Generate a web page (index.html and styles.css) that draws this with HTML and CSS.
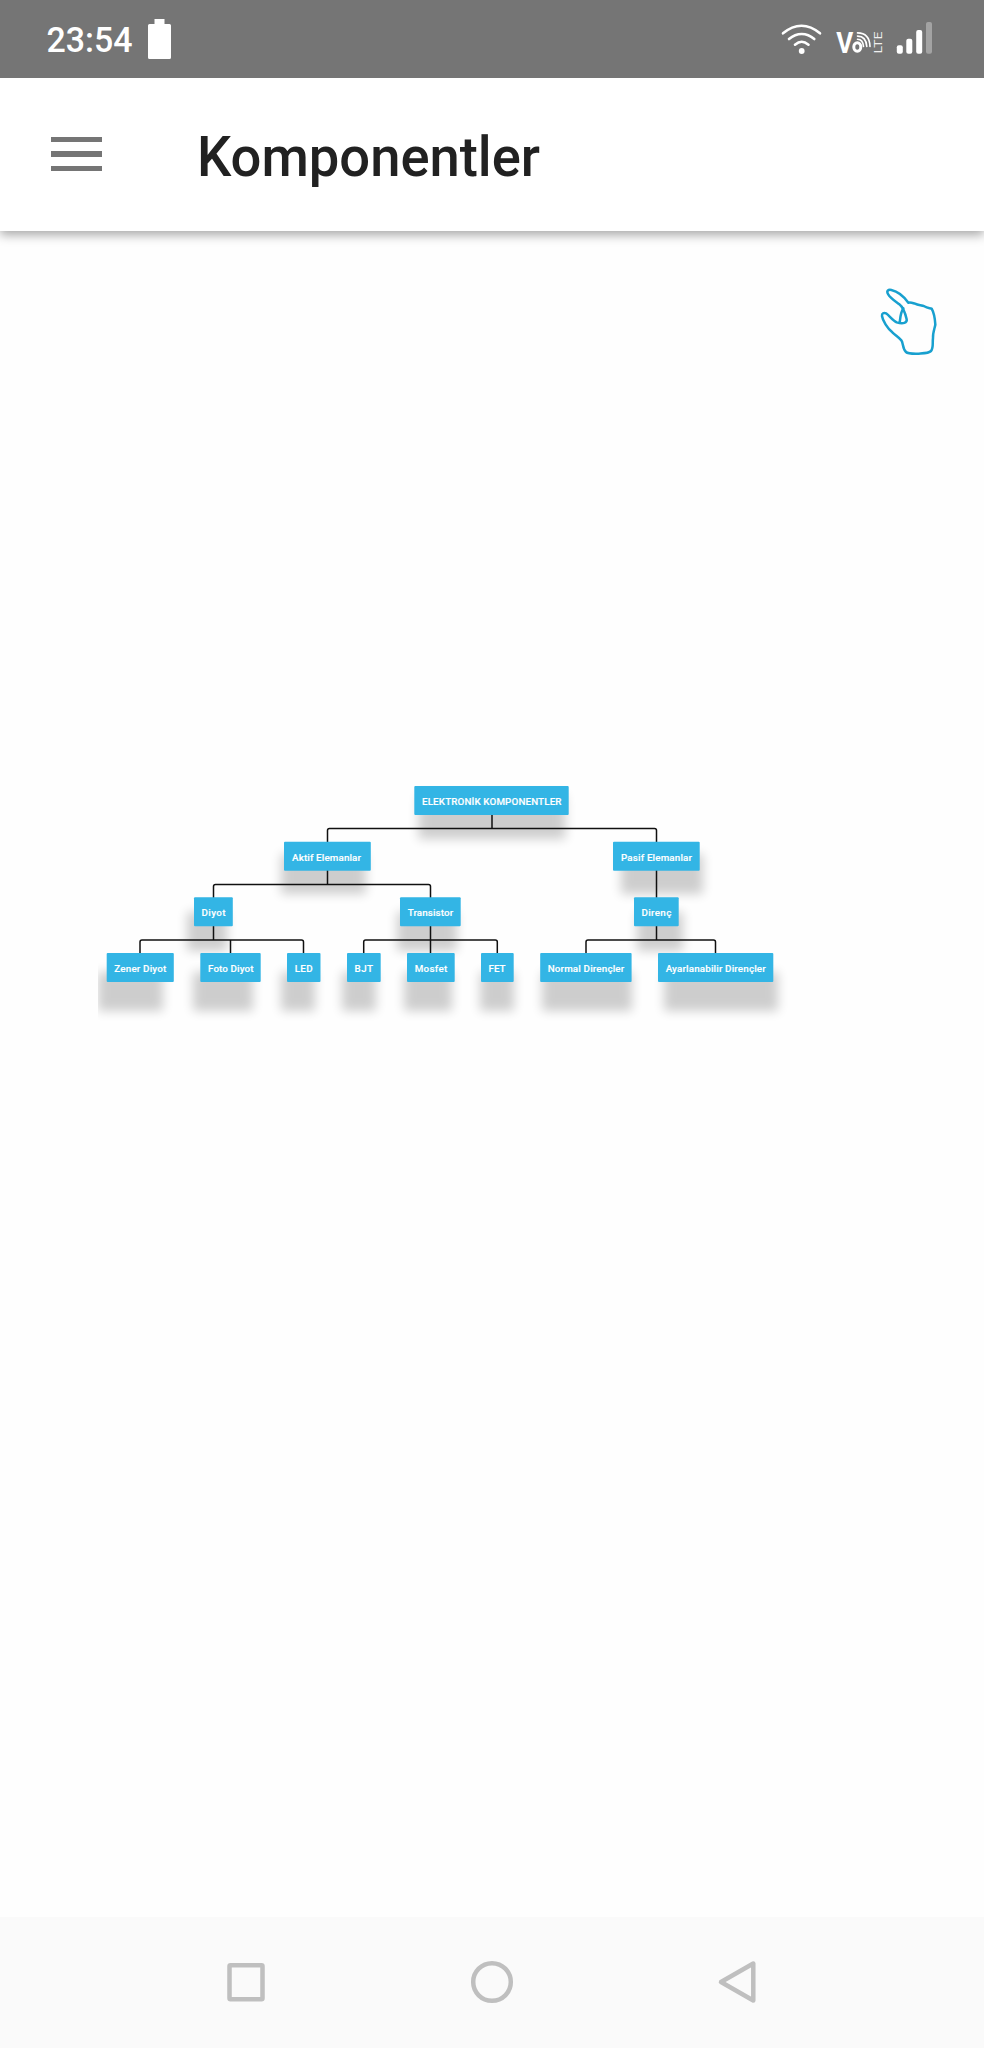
FILE: index.html
```html
<!DOCTYPE html>
<html lang="tr">
<head>
<meta charset="utf-8">
<title>Komponentler</title>
<link rel="stylesheet" href="styles.css">
</head>
<body>
<div class="screen">
  <header class="status">
    <div class="status-left">
      <svg class="clock" viewBox="0 0 90 44"><text x="0.500" y="34" textLength="86" lengthAdjust="spacingAndGlyphs">23:54</text></svg>
      <svg class="battery" viewBox="0 0 23 41"><path d="M6.5 0h10v5H21.500q1.500 0 1.500 1.500V38.500q0 1.500-1.500 1.500H1.500Q0 40 0 38.500V6.500Q0 5 1.500 5h5z"/></svg>
    </div>
    <svg class="signals" viewBox="0 0 224 78" width="224" height="78">
      <g class="wave">
        <path d="M23 33.300Q32 25.700 41.500 25.700T60 33.300"/>
        <path d="M29 39Q35 34 41.700 34T54.300 39"/>
        <path d="M35 44.700Q38.500 41.800 41.700 41.800T48.500 44.700"/>
      </g>
      <circle cx="41.700" cy="51" r="2.900" fill="#fff"/>
      <text class="volte" x="76.300" y="52.800" textLength="17" lengthAdjust="spacingAndGlyphs">V</text>
      <ellipse class="ring" cx="97.300" cy="47" rx="3.500" ry="4.300"/>
      <g class="arc">
        <path d="M97.500 39.300Q103 39.500 103.500 46.500"/>
        <path d="M97.500 36.100Q106 36 106.800 46.500"/>
        <path d="M97.500 32.900Q109.500 33 110 46.500"/>
      </g>
      <text class="lte" transform="translate(121.700 53.500) rotate(-90)" textLength="22" lengthAdjust="spacingAndGlyphs">LTE</text>
      <g fill="#fff">
        <rect x="136.800" y="45.300" width="6" height="8.400" rx="2"/>
        <rect x="146.300" y="38.700" width="6" height="15" rx="2"/>
        <rect x="156.200" y="30" width="6" height="23.700" rx="2"/>
        <rect class="dim" x="166" y="22" width="6" height="31.700" rx="2"/>
      </g>
    </svg>
  </header>
  <div class="appbar">
    <div class="menu"><i></i><i></i><i></i></div>
    <svg class="title" viewBox="0 0 360 76"><text x="-4" y="54" textLength="343" lengthAdjust="spacingAndGlyphs">Komponentler</text></svg>
  </div>
  <main class="content">
    <svg class="hand" viewBox="0 0 300 300">
      <path d="M145 98C132 80 112 64 94 60C84 58 79 63 84 72C90 84 106 94 118 103C130 112 137 135 140 148C142 158 130 163 110 157C98 151 88 137 78 130C72 127 65 130 66 138C68 152 82 175 97 187C106 196 115 201 124 211C130 218 127 235 138 246C144 252 160 251 176 251C190 250 206 250 213 243C221 235 217 218 219 204C218 190 223 178 226 164C225 148 223 130 215 116C209 114 202 115 193 109C186 104 176 107 165 101C158 99 153 96 145 98"/>
      <path d="M130 115C120 130 121 148 119 158"/>
    </svg>
    <svg class="tree" viewBox="98 770 720 260" width="720" height="260">
      <defs><filter id="soft" x="-80%" y="-80%" width="260%" height="260%"><feGaussianBlur stdDeviation="5.200"/></filter></defs>
      <g class="shade">
        <rect x="418.500" y="795" width="147" height="44"/>
        <rect x="281" y="854" width="85" height="40"/>
        <rect x="621" y="854" width="82" height="40"/>
        <rect x="187" y="912" width="40" height="39"/>
        <rect x="397" y="912" width="60" height="39"/>
        <rect x="637" y="912" width="46" height="39"/>
        <rect x="98" y="972" width="65" height="39"/>
        <rect x="193" y="972" width="60" height="39"/>
        <rect x="281" y="972" width="34" height="39"/>
        <rect x="342" y="972" width="34" height="39"/>
        <rect x="404" y="972" width="48" height="39"/>
        <rect x="480" y="972" width="34" height="39"/>
        <rect x="542" y="972" width="90" height="39"/>
        <rect x="664" y="972" width="114" height="39"/>
      </g>
      <g class="links">
        <path d="M492 815V828.500M327.500 842V830.500Q327.500 828.500 329.500 828.500H654.500Q656.500 828.500 656.500 830.500V842"/>
        <path d="M327.500 870V884.500M213.500 898V886.500Q213.500 884.500 215.500 884.500H428.500Q430.500 884.500 430.500 886.500V898M656.500 870V898"/>
        <path d="M213.500 926V940H230.500V953M140 953V942Q140 940 142 940H301.500Q303.500 940 303.500 942V953"/>
        <path d="M430.500 926V953M363.700 953V942Q363.700 940 365.700 940H495.300Q497.300 940 497.300 942V953"/>
        <path d="M656.500 926V940M586 953V942Q586 940 588 940H713.500Q715.500 940 715.500 942V953"/>
      </g>
      <g class="box">
        <rect x="414.300" y="786" width="154.400" height="29" rx="1"/>
        <rect x="284" y="841.700" width="86.800" height="29" rx="1"/>
        <rect x="613" y="841.700" width="86.700" height="29" rx="1"/>
        <rect x="194" y="897.300" width="38.800" height="29" rx="1"/>
        <rect x="400" y="897.300" width="60.700" height="29" rx="1"/>
        <rect x="634" y="897.300" width="44.700" height="29" rx="1"/>
        <rect x="106.700" y="953" width="67.100" height="29" rx="1"/>
        <rect x="200.300" y="953" width="60.400" height="29" rx="1"/>
        <rect x="287" y="953" width="33.500" height="29" rx="1"/>
        <rect x="347" y="953" width="33.700" height="29" rx="1"/>
        <rect x="407" y="953" width="47.700" height="29" rx="1"/>
        <rect x="481" y="953" width="32.700" height="29" rx="1"/>
        <rect x="540.200" y="953" width="91.400" height="29" rx="1"/>
        <rect x="658" y="953" width="115.300" height="29" rx="1"/>
      </g>
      <g class="label">
        <text x="422" y="804.800" textLength="139.500">ELEKTRONİK KOMPONENTLER</text>
        <text x="292" y="860.700" textLength="69">Aktif Elemanlar</text>
        <text x="621" y="860.700" textLength="71">Pasif Elemanlar</text>
        <text x="201.500" y="916.300" textLength="24">Diyot</text>
        <text x="407.700" y="916.300" textLength="45.500">Transistor</text>
        <text x="641.500" y="916.300" textLength="29.800">Direnç</text>
        <text x="114.300" y="972" textLength="52">Zener Diyot</text>
        <text x="208" y="972" textLength="45.500">Foto Diyot</text>
        <text x="294.700" y="972" textLength="18">LED</text>
        <text x="354.500" y="972" textLength="18.500">BJT</text>
        <text x="414.700" y="972" textLength="32.500">Mosfet</text>
        <text x="488.500" y="972" textLength="17">FET</text>
        <text x="547.700" y="972" textLength="76.500">Normal Dirençler</text>
        <text x="665.700" y="972" textLength="100">Ayarlanabilir Dirençler</text>
      </g>
    </svg>
  </main>
  <nav class="nav">
    <svg viewBox="0 0 48 48"><rect x="7.500" y="7.300" width="33" height="34" rx="1"/></svg>
    <svg viewBox="0 0 48 48"><circle cx="24" cy="24" r="18.800"/></svg>
    <svg viewBox="0 0 48 48"><path d="M39.300 5.500V42.500L7 24z"/></svg>
  </nav>
</div>
</body>
</html>
```
FILE: styles.css
```css
body {
  margin: 0;
  background: #fefefe;
  font-family: Roboto, "Liberation Sans", sans-serif;
}

.screen {
  display: flex;
  flex-direction: column;
  width: 984px;
  height: 2048px;
  overflow: hidden;
}

.status {
  display: flex;
  justify-content: space-between;
  height: 78px;
  flex: none;
  background: #757575;
  z-index: 2;
}

.status-left {
  display: flex;
  gap: 11.500px;
  padding: 18px 0 0 46px;
}

.clock { width: 90px; height: 44px; overflow: visible; }
.clock text { font-size: 34.500px; font-weight: 500; fill: #fff; }
.battery { width: 23px; height: 41px; margin-top: 1px; fill: #fff; }

.wave path, .arc path { fill: none; stroke: #fff; stroke-linecap: round; }
.wave path { stroke-width: 2.600px; }
.arc path { stroke-width: 1.600px; }
.volte { font-size: 29px; font-weight: 700; fill: #fff; }
.ring { fill: none; stroke: #fff; stroke-width: 3px; }
.lte { font-size: 11.500px; fill: #f0f0f0; }
.dim { fill: #a3a3a3; }

.appbar {
  display: flex;
  flex: none;
  height: 153px;
  box-sizing: border-box;
  padding: 44px 0 0 51px;
  gap: 99px;
  background: #fff;
  box-shadow: 0 4px 10px rgba(0, 0, 0, .34);
  z-index: 1;
}

.menu {
  display: flex;
  flex-direction: column;
  gap: 8.700px;
  width: 51px;
  padding-top: 14.600px;
}
.menu i { height: 5.800px; background: #757575; }

.title { width: 360px; height: 76px; overflow: visible; }
.title text { font-size: 55px; font-weight: 500; fill: #212121; }

.content {
  display: flex;
  flex-direction: column;
  flex: 1;
}

.hand {
  width: 100px;
  height: 100px;
  margin: 39px 24px 0 0;
  align-self: flex-end;
  fill: none;
  stroke: #18a0cf;
  stroke-width: 7.500px;
  stroke-linejoin: round;
  stroke-linecap: round;
}

.tree { display: block; margin: 400px 0 0 98px; overflow: hidden; }
.shade rect { fill: #000; opacity: .19; filter: url(#soft); }
.links { fill: none; stroke: #101010; stroke-width: 1.500px; }
.box { fill: #33b5e5; }
.label { font-size: 9.800px; font-weight: 500; fill: #fff; stroke: #fff; stroke-width: .15px; }

.nav {
  display: flex;
  justify-content: center;
  flex: none;
  height: 131px;
  box-sizing: border-box;
  padding-top: 41px;
  gap: 198px;
  background: #fafafa;
}
.nav svg {
  width: 48px;
  height: 48px;
  fill: none;
  stroke: #bfbfbf;
  stroke-width: 4.500px;
  stroke-linejoin: round;
}
```
